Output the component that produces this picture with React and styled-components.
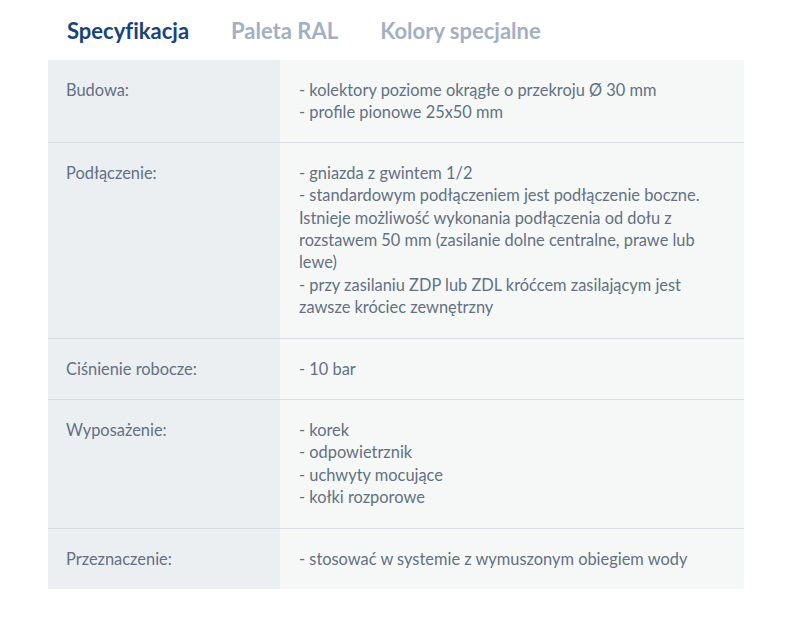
import React from 'react'
import styled, { createGlobalStyle } from 'styled-components'

const GlobalStyle = createGlobalStyle`
  body {
    margin: 0;
    background: #ffffff;
    font-family: Lato, "Noto Sans", sans-serif;
  }
`

const Page = styled.div`
  padding: 0 67px 0 48px;
`

const Tabs = styled.nav`
  display: flex;
  gap: 42px;
  height: 60px;
  align-items: center;
  padding-left: 19px;
`

const Tab = styled.span`
  font-size: 22px;
  font-weight: 700;
  font-variant-ligatures: none;
  color: ${(p) => (p.active ? '#17457a' : '#a3b0c4')};
  cursor: pointer;
`

const Table = styled.div`
  display: grid;
  grid-template-columns: 232px 1fr;
`

const Row = styled.div`
  display: contents;
`

const Label = styled.div`
  background: #eceff2;
  padding: 19px 18px ${(p) => (p.first ? '18px' : '19px')};
  font-size: 16.4px;
  line-height: 22.4px;
  color: #627083;
  border-top: ${(p) => (p.first ? 'none' : '1px solid #d9dde3')};
`

const Value = styled(Label)`
  background: #f6f8f8;
  padding-left: 19px;
  padding-right: 28px;
`

const specs = [
  {
    label: 'Budowa:',
    value: ['- kolektory poziome okrągłe o przekroju Ø 30 mm', '- profile pionowe 25x50 mm'],
  },
  {
    label: 'Podłączenie:',
    value: [
      '- gniazda z gwintem 1/2',
      '- standardowym podłączeniem jest podłączenie boczne. Istnieje możliwość wykonania podłączenia od dołu z rozstawem 50 mm (zasilanie dolne centralne, prawe lub lewe)',
      '- przy zasilaniu ZDP lub ZDL króćcem zasilającym jest zawsze króciec zewnętrzny',
    ],
  },
  { label: 'Ciśnienie robocze:', value: ['- 10 bar'] },
  {
    label: 'Wyposażenie:',
    value: ['- korek', '- odpowietrznik', '- uchwyty mocujące', '- kołki rozporowe'],
  },
  { label: 'Przeznaczenie:', value: ['- stosować w systemie z wymuszonym obiegiem wody'] },
]

const App = () => {
  return (
    <>
      <GlobalStyle />
      <Page>
        <Tabs>
          <Tab active>Specyfikacja</Tab>
          <Tab>Paleta RAL</Tab>
          <Tab>Kolory specjalne</Tab>
        </Tabs>
        <Table>
          {specs.map((s, i) => (
            <Row key={s.label}>
              <Label first={i === 0}>{s.label}</Label>
              <Value first={i === 0}>
                {s.value.map((line) => (
                  <div key={line}>{line}</div>
                ))}
              </Value>
            </Row>
          ))}
        </Table>
      </Page>
    </>
  )
}

export default App
